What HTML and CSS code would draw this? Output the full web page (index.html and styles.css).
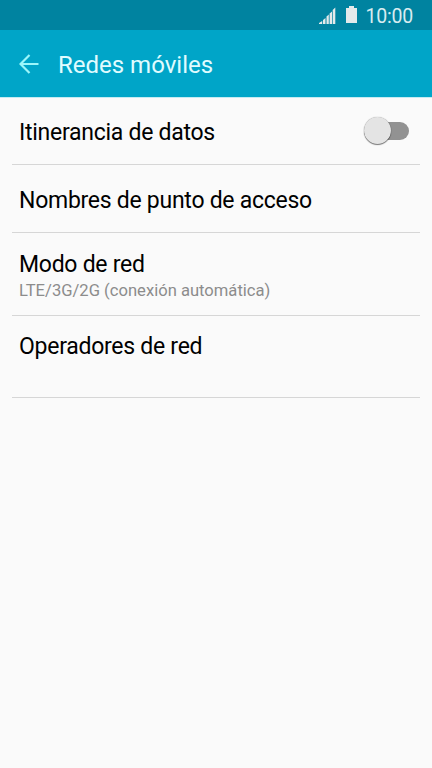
FILE: index.html
```html
<!DOCTYPE html>
<html lang="es">
<head>
    <meta charset="UTF-8">
    <meta name="viewport" content="width=device-width, initial-scale=1.0">
    <title>Redes móviles</title>
    <link rel="stylesheet" href="styles.css">
</head>
<body>

    <div class="status-bar">
        <svg class="signal" width="17" height="17" viewBox="0 0 17 17">
            <path d="M0 17v-1l3.200-2v3zM4 17v-4l2.500-2v6zM7.500 17V9.500l2.300-2v9.500zM10.600 17V6.500l2.400-2v12.500zM13.700 17V3l2.600-2.500v16.500z"/>
        </svg>
        <svg class="battery" width="11" height="17" viewBox="0 0 11 17">
            <path d="M3 0h5v2h3v15H0V2h3z"/>
        </svg>
        <span class="clock">10:00</span>
    </div>

    <header class="app-bar">
        <svg class="back" width="20" height="20" viewBox="0 0 20 20">
            <path d="M19.500 10H2M10.500 1L1.500 10L10.500 19"/>
        </svg>
        <h1>Redes móviles</h1>
    </header>

    <ul class="settings">
        <li class="row">
            <span class="title">Itinerancia de datos</span>
            <span class="switch"><span class="knob"></span></span>
        </li>
        <li class="row">
            <span class="title">Nombres de punto de acceso</span>
        </li>
        <li class="row mode">
            <span class="title">Modo de red</span>
            <span class="summary">LTE/3G/2G (conexión automática)</span>
        </li>
        <li class="row operators">
            <span class="title">Operadores de red</span>
        </li>
    </ul>

</body>
</html>
```
FILE: styles.css
```css
body {
    margin: 0;
    min-height: 768px;
    background-color: #fafafa;
    font-family: Roboto, sans-serif;
    color: #000;
}
.status-bar {
    display: flex;
    align-items: center;
    justify-content: flex-end;
    height: 30px;
    box-sizing: border-box;
    padding-right: 19px;
    background-color: #0083a0;
    color: #d8ecf0;
}
.signal, .battery {
    fill: #e4eaeb;
}
.battery {
    margin: 0 8px 2px 10px;
}
.clock {
    padding-top: 3px;
    font-size: 19.5px;
    line-height: 30px;
    letter-spacing: -0.2px;
}
.app-bar {
    display: flex;
    align-items: center;
    height: 68px;
    box-sizing: border-box;
    padding-left: 19px;
    border-bottom: 1px solid #c4ebf2;
    background-color: #00a5c8;
    color: #e0fcff;
}
.back {
    fill: none;
    stroke: #9cf6fa;
    stroke-width: 2.2;
}
h1 {
    margin: 2px 0 0 19px;
    font-size: 24px;
    font-weight: 400;
}
.settings {
    margin: -1px 12px 0;
    padding: 0;
    list-style: none;
}
.row {
    display: flex;
    align-items: center;
    justify-content: space-between;
    height: 68px;
    box-sizing: border-box;
    padding: 0 11px 0 7px;
    border-bottom: 1px solid #d6d6d6;
}
.mode, .operators {
    flex-direction: column;
    align-items: flex-start;
    justify-content: flex-start;
    height: 83px;
    padding-top: 14px;
}
.operators {
    height: 82px;
    padding-top: 13px;
}
.title {
    padding-top: 4px;
    font-size: 23px;
    line-height: 28px;
    letter-spacing: -0.27px;
}
.summary {
    font-size: 16.6px;
    line-height: 23px;
    color: #8c8c8c;
}
.switch {
    display: flex;
    align-items: center;
    width: 45px;
    height: 18px;
    border-radius: 9px;
    background-color: #929292;
}
.knob {
    width: 27px;
    height: 27px;
    flex: none;
    border-radius: 50%;
    background-color: #e4e4e4;
    box-shadow: 0 1px 1px rgba(0, 0, 0, 0.5), 0 0 1px rgba(0, 0, 0, 0.4);
}
```
